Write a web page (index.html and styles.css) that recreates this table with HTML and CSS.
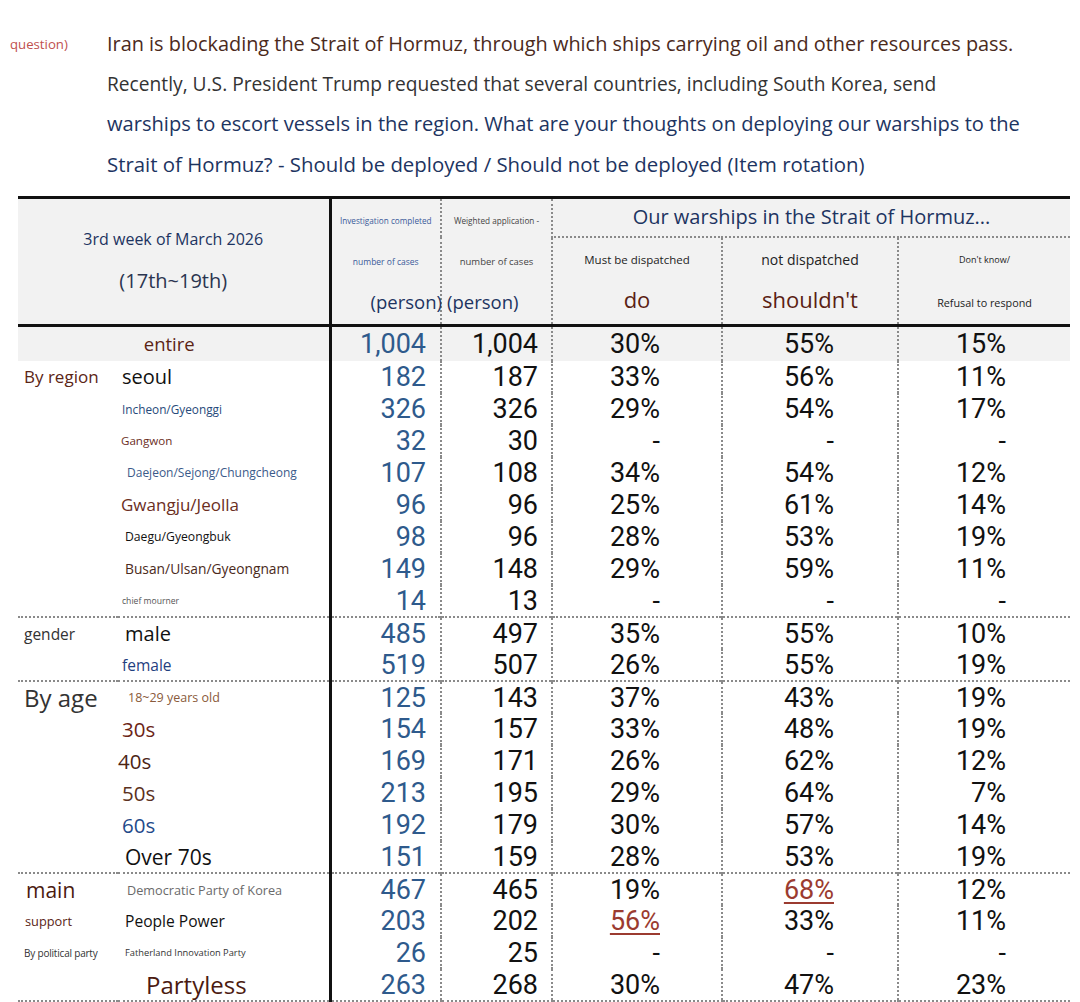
FILE: index.html
```html
<!DOCTYPE html>
<html>
<head>
<meta charset="utf-8">
<link rel="stylesheet" href="styles.css">
</head>
<body>
<div class="question">
  <div class="q-label">question)</div>
  <div class="q-text">
    <span class="q-line q1">Iran is blockading the Strait of Hormuz, through which ships carrying oil and other resources pass.</span>
    <span class="q-line q2">Recently, U.S. President Trump requested that several countries, including South Korea, send</span>
    <span class="q-line q3">warships to escort vessels in the region. What are your thoughts on deploying our warships to the</span>
    <span class="q-line q4">Strait of Hormuz? - Should be deployed / Should not be deployed (Item rotation)</span>
  </div>
</div>

<table class="poll">
  <colgroup>
    <col class="c-grp"><col class="c-sub"><col class="c-n1"><col class="c-n2"><col class="c-p1"><col class="c-p2"><col class="c-p3">
  </colgroup>
  <thead>
    <tr class="h-row1">
      <th colspan="2" rowspan="2" class="h-period">
        <span class="hp-week">3rd week of March 2026</span>
        <span class="hp-days">(17th~19th)</span>
      </th>
      <th rowspan="2" class="h-count h-n1">
        <span class="hc-top blue">Investigation completed</span>
        <span class="hc-mid blue">number of cases</span>
        <span class="hc-unit right">(person)</span>
      </th>
      <th rowspan="2" class="h-count h-n2">
        <span class="hc-top dark">Weighted application -</span>
        <span class="hc-mid dark big">number of cases</span>
        <span class="hc-unit left">(person)</span>
      </th>
      <th colspan="3" class="h-title">Our warships in the Strait of Hormuz...</th>
    </tr>
    <tr class="h-row2">
      <th class="h-opt">
        <span class="ho-top s12">Must be dispatched</span>
        <span class="ho-bot big">do</span>
      </th>
      <th class="h-opt">
        <span class="ho-top s14">not dispatched</span>
        <span class="ho-bot big">shouldn't</span>
      </th>
      <th class="h-opt">
        <span class="ho-top s10">Don't know/</span>
        <span class="ho-bot s11">Refusal to respond</span>
      </th>
    </tr>
  </thead>
  <tbody>
    <tr class="r-total">
      <td colspan="2" class="total-label">entire</td>
      <td class="n1">1,004</td><td class="n2">1,004</td><td class="p1">30%</td><td class="p2">55%</td><td class="p3">15%</td>
    </tr>
    <tr>
      <td class="grp g-region">By region</td><td class="sub l-seoul">seoul</td>
      <td class="n1">182</td><td class="n2">187</td><td class="p1">33%</td><td class="p2">56%</td><td class="p3">11%</td>
    </tr>
    <tr>
      <td class="grp"></td><td class="sub l-incheon">Incheon/Gyeonggi</td>
      <td class="n1">326</td><td class="n2">326</td><td class="p1">29%</td><td class="p2">54%</td><td class="p3">17%</td>
    </tr>
    <tr>
      <td class="grp"></td><td class="sub l-gangwon">Gangwon</td>
      <td class="n1">32</td><td class="n2">30</td><td class="p1">-</td><td class="p2">-</td><td class="p3">-</td>
    </tr>
    <tr>
      <td class="grp"></td><td class="sub l-daejeon">Daejeon/Sejong/Chungcheong</td>
      <td class="n1">107</td><td class="n2">108</td><td class="p1">34%</td><td class="p2">54%</td><td class="p3">12%</td>
    </tr>
    <tr>
      <td class="grp"></td><td class="sub l-gwangju">Gwangju/Jeolla</td>
      <td class="n1">96</td><td class="n2">96</td><td class="p1">25%</td><td class="p2">61%</td><td class="p3">14%</td>
    </tr>
    <tr>
      <td class="grp"></td><td class="sub l-daegu">Daegu/Gyeongbuk</td>
      <td class="n1">98</td><td class="n2">96</td><td class="p1">28%</td><td class="p2">53%</td><td class="p3">19%</td>
    </tr>
    <tr>
      <td class="grp"></td><td class="sub l-busan">Busan/Ulsan/Gyeongnam</td>
      <td class="n1">149</td><td class="n2">148</td><td class="p1">29%</td><td class="p2">59%</td><td class="p3">11%</td>
    </tr>
    <tr>
      <td class="grp"></td><td class="sub l-chief">chief mourner</td>
      <td class="n1">14</td><td class="n2">13</td><td class="p1">-</td><td class="p2">-</td><td class="p3">-</td>
    </tr>
    <tr class="group-start">
      <td class="grp g-gender">gender</td><td class="sub l-male">male</td>
      <td class="n1">485</td><td class="n2">497</td><td class="p1">35%</td><td class="p2">55%</td><td class="p3">10%</td>
    </tr>
    <tr>
      <td class="grp"></td><td class="sub l-female">female</td>
      <td class="n1">519</td><td class="n2">507</td><td class="p1">26%</td><td class="p2">55%</td><td class="p3">19%</td>
    </tr>
    <tr class="group-start">
      <td class="grp g-age">By age</td><td class="sub l-18">18~29 years old</td>
      <td class="n1">125</td><td class="n2">143</td><td class="p1">37%</td><td class="p2">43%</td><td class="p3">19%</td>
    </tr>
    <tr>
      <td class="grp"></td><td class="sub l-30">30s</td>
      <td class="n1">154</td><td class="n2">157</td><td class="p1">33%</td><td class="p2">48%</td><td class="p3">19%</td>
    </tr>
    <tr>
      <td class="grp"></td><td class="sub l-40">40s</td>
      <td class="n1">169</td><td class="n2">171</td><td class="p1">26%</td><td class="p2">62%</td><td class="p3">12%</td>
    </tr>
    <tr>
      <td class="grp"></td><td class="sub l-50">50s</td>
      <td class="n1">213</td><td class="n2">195</td><td class="p1">29%</td><td class="p2">64%</td><td class="p3">7%</td>
    </tr>
    <tr>
      <td class="grp"></td><td class="sub l-60">60s</td>
      <td class="n1">192</td><td class="n2">179</td><td class="p1">30%</td><td class="p2">57%</td><td class="p3">14%</td>
    </tr>
    <tr>
      <td class="grp"></td><td class="sub l-70">Over 70s</td>
      <td class="n1">151</td><td class="n2">159</td><td class="p1">28%</td><td class="p2">53%</td><td class="p3">19%</td>
    </tr>
    <tr class="group-start party">
      <td class="grp g-main">main</td><td class="sub l-dem">Democratic Party of Korea</td>
      <td class="n1">467</td><td class="n2">465</td><td class="p1">19%</td><td class="p2"><span class="hl">68%</span></td><td class="p3">12%</td>
    </tr>
    <tr class="party">
      <td class="grp g-support">support</td><td class="sub l-ppp">People Power</td>
      <td class="n1">203</td><td class="n2">202</td><td class="p1"><span class="hl">56%</span></td><td class="p2">33%</td><td class="p3">11%</td>
    </tr>
    <tr class="party">
      <td class="grp g-party">By political party</td><td class="sub l-father">Fatherland Innovation Party</td>
      <td class="n1">26</td><td class="n2">25</td><td class="p1">-</td><td class="p2">-</td><td class="p3">-</td>
    </tr>
    <tr class="party last">
      <td class="grp"></td><td class="sub l-none">Partyless</td>
      <td class="n1">263</td><td class="n2">268</td><td class="p1">30%</td><td class="p2">47%</td><td class="p3">23%</td>
    </tr>
  </tbody>
</table>
</body>
</html>
```

FILE: styles.css
```css
* { box-sizing: border-box; }

body {
  margin: 0;
  background: #ffffff;
  font-family: "Open Sans", "Noto Sans", "Liberation Sans", sans-serif;
  color: #222;
}

/* ---------- question ---------- */
.question {
  display: grid;
  grid-template-columns: 97px 1fr;
  padding: 24px 0 0 10px;
}
.q-label {
  font-size: 13.2px;
  line-height: 40px;
  color: #c0504d;
}
.q-line {
  display: block;
  line-height: 40px;
  white-space: nowrap;
}
.q1 { font-size: 19.9px; color: #4b2a1c; }
.q2 { font-size: 19.2px; color: #333333; }
.q3 { font-size: 20.1px; color: #1d3461; }
.q4 { font-size: 20.4px; color: #1d3461; }

/* ---------- table ---------- */
.poll {
  margin: 12px 0 0 18px;
  width: 1052px;
  table-layout: fixed;
  border-collapse: collapse;
}
.c-grp { width: 100px; }
.c-sub { width: 212px; }
.c-n1 { width: 111px; }
.c-n2 { width: 111px; }
.c-p1 { width: 170px; }
.c-p2 { width: 176px; }
.c-p3 { width: 172px; }

.poll th, .poll td {
  padding: 0;
  font-weight: 400;
  white-space: nowrap;
}

/* header */
.poll thead th {
  background: #f2f2f2;
  border-top: 3px solid #111;
  border-bottom: 3px solid #111;
  vertical-align: top;
}
.poll thead tr.h-row2 th { border-top: 2px dotted #8a8a8a; }
.poll thead th.h-count,
.poll thead th.h-opt,
.poll thead th.h-title { border-left: 2px dotted #8a8a8a; }
.poll thead th.h-n1 { border-left: 3px solid #111; }
.poll thead th.h-title { border-bottom: 2px dotted #8a8a8a; }

.h-row1 { height: 39px; }
.h-row2 { height: 76px; }

.poll th.h-period {
  padding-top: 19px;
  text-align: center;
  color: #1d3461;
}
.hp-week, .hp-days { display: block; line-height: 42px; }
.hp-week { font-size: 16px; }
.hp-days { font-size: 20px; color: #2b3550; }

.poll th.h-count { padding-top: 1px; color: #1d3461; }
.hc-top, .hc-mid, .hc-unit { display: block; line-height: 41px; }
.hc-top { font-size: 8.2px; text-align: center; }
.hc-mid { font-size: 8.5px; text-align: center; }
.hc-mid.big { font-size: 9.5px; }
.hc-unit { font-size: 18.5px; color: #1d3461; line-height: 40px; }
.hc-unit.right { text-align: right; margin-right: -2px; }
.hc-unit.left { text-align: left; padding-left: 5px; }
.blue { color: #3a5a9a; }
.dark { color: #444; }

.poll th.h-title {
  font-size: 20px;
  line-height: 36px;
  color: #1d3461;
  text-align: center;
  vertical-align: middle;
}

.h-opt { text-align: center; color: #222; }
.ho-top, .ho-bot { display: block; line-height: 42px; }
.ho-top { line-height: 44px; }
.ho-bot.big { font-size: 22px; color: #5b1f14; line-height: 34px; }
.s10 { font-size: 9px; }
.s11 { font-size: 10.8px; }
.s12 { font-size: 11.5px; }
.s14 { font-size: 14px; }

/* body */
.poll tbody td {
  height: 32px;
  line-height: 30px;
  vertical-align: middle;
}
.poll td.n1,
.poll td.n2,
.poll td.p1,
.poll td.p2,
.poll td.p3 {
  font-family: Roboto, "Liberation Sans", sans-serif;
  font-size: 27px;
  text-align: right;
  color: #111;
}
.poll td.n1 { border-left: 3px solid #111; padding-right: 14px; color: #2e5a8c; }
.poll td.n2 { border-left: 2px dotted #8a8a8a; padding-right: 13px; }
.poll td.p1 { border-left: 2px dotted #8a8a8a; padding-right: 61px; }
.poll td.p2 { border-left: 2px dotted #8a8a8a; padding-right: 63px; }
.poll td.p3 { border-left: 2px dotted #8a8a8a; padding-right: 64px; }

.poll tr.r-total td { height: 36px; background: #f2f2f2; }
.poll td.total-label { text-align: center; font-size: 18.5px; color: #5b2415; padding-right: 8px; }

.poll tr.group-start td { border-top: 2px dotted #8a8a8a; }
.poll tr.last td { border-bottom: 2px dotted #8a8a8a; }

.hl {
  color: #9b3b30;
  text-decoration: underline;
  text-decoration-thickness: 2px;
  text-underline-offset: 3px;
}

/* labels */
.poll td.grp { padding-left: 6px; }

.poll td.g-region { font-size: 17px; color: #5b2415; }
.poll td.g-gender { font-size: 15.5px; color: #333; }
.poll td.g-age { font-size: 24px; color: #333; }
.poll td.g-main { font-size: 21px; color: #4b1a10; padding-left: 8px; }
.poll td.g-support { font-size: 12.8px; color: #5b2415; padding-left: 7px; }
.poll td.g-party { font-size: 10px; color: #333; letter-spacing: -0.2px; }

.poll td.l-seoul { font-size: 20px; color: #111; padding-left: 4px; }
.poll td.l-incheon { font-size: 11.8px; color: #274a7a; padding-left: 4px; }
.poll td.l-gangwon { font-size: 11.6px; color: #6b2e1e; padding-left: 3px; }
.poll td.l-daejeon { font-size: 12px; color: #3b5a8a; padding-left: 9px; }
.poll td.l-gwangju { font-size: 17px; color: #6b2e1e; padding-left: 3px; }
.poll td.l-daegu { font-size: 12.2px; color: #111; padding-left: 7px; }
.poll td.l-busan { font-size: 13.8px; color: #4b2a20; padding-left: 7px; }
.poll td.l-chief { font-size: 8.6px; color: #555; padding-left: 4px; }
.poll td.l-male { font-size: 20px; color: #111; padding-left: 7px; }
.poll td.l-female { font-size: 15.5px; color: #1f4080; padding-left: 4px; }
.poll td.l-18 { font-size: 12.5px; color: #8a5a3a; padding-left: 10px; }
.poll td.l-30 { font-size: 20.5px; color: #6b2415; padding-left: 4px; }
.poll td.l-40 { font-size: 20.5px; color: #4b2415; padding-left: 0; }
.poll td.l-50 { font-size: 20.5px; color: #5b3020; padding-left: 4px; }
.poll td.l-60 { font-size: 20.5px; color: #1f4a8a; padding-left: 4px; }
.poll td.l-70 { font-size: 21px; color: #111; padding-left: 7px; }
.poll td.l-dem { font-size: 12.7px; color: #6a6a6a; padding-left: 9px; }
.poll td.l-ppp { font-size: 15.6px; color: #111; padding-left: 7px; }
.poll td.l-father { font-size: 9.3px; color: #333; padding-left: 7px; }
.poll td.l-none { font-size: 24px; color: #4b1a10; padding-left: 28px; }
```
